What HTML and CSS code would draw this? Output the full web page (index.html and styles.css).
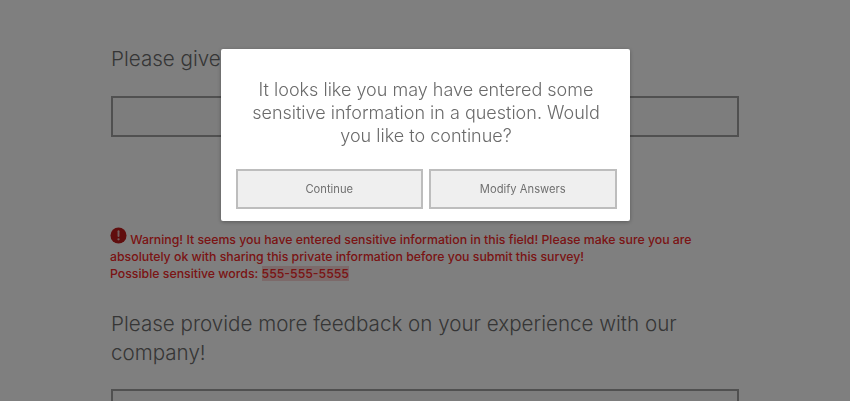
FILE: index.html
```html
<!DOCTYPE html>
<html lang="en">
<head>
    <meta charset="UTF-8">
    <meta name="viewport" content="width=device-width, initial-scale=1.0">
    <title>Survey</title>
    <link rel="stylesheet" href="styles.css">
</head>
<body>
    <div class="survey">
        <div class="question">
            <h2>Please give us your feedback on our service today!</h2>
            <div class="answer-box"></div>
        </div>
        <div class="warning">
            <svg class="warning-icon" viewBox="0 0 18 18" width="17" height="17">
                <circle cx="9" cy="9" r="8.5" fill="#c01c1c"/>
                <rect x="8" y="3.5" width="2" height="7" rx="1" fill="#e8c0c0"/>
                <circle cx="9" cy="13" r="1.2" fill="#e8c0c0"/>
            </svg>
            Warning! It seems you have entered sensitive information in this field! Please make sure you are absolutely ok with sharing this private information before you submit this survey!<br>
            Possible sensitive words: <span class="highlight">555-555-5555</span>
        </div>
        <div class="question second">
            <h2>Please provide more feedback on your experience with our company!</h2>
            <div class="answer-box"></div>
        </div>
    </div>

    <div class="overlay">
        <div class="modal">
            <p>It looks like you may have entered some sensitive information in a question. Would you like to continue?</p>
            <div class="modal-buttons">
                <button type="button">Continue</button>
                <button type="button">Modify Answers</button>
            </div>
        </div>
    </div>
</body>
</html>
```

FILE: styles.css
```css
* {
    margin: 0;
    padding: 0;
    box-sizing: border-box;
    font-family: "Inter", "Liberation Sans", sans-serif;
}

html, body {
    height: 401px;
    overflow: hidden;
}

body {
    background: #fff;
}

.survey {
    width: 628px;
    margin-left: 111px;
    padding-top: 44px;
}

.question h2 {
    font-size: 20.6px;
    font-weight: 300;
    line-height: 29px;
    color: #6c6c6c;
}

.answer-box {
    height: 41px;
    margin-top: 23px;
    border: 2px solid #a0a0a0;
    background: #fafafa;
}

.warning {
    width: 600px;
    margin-top: 90px;
    margin-left: -1px;
    font-size: 12.3px;
    font-weight: 500;
    line-height: 17px;
    color: #f52a2a;
}

.warning-icon {
    vertical-align: 0;
}

.highlight {
    background: #f9d4d4;
}

.second {
    margin-top: 27px;
}

.second .answer-box {
    margin-top: 22px;
}

.overlay {
    position: fixed;
    top: 0;
    left: 0;
    width: 100%;
    height: 100%;
    background: rgba(0, 0, 0, 0.5);
    display: flex;
    justify-content: center;
    align-items: flex-start;
    padding-top: 49px;
}

.modal {
    width: 409px;
    height: 172px;
    background: #fff;
    border-radius: 2px;
    padding: 29px 13px 0 15px;
    box-shadow: 0 1px 4px rgba(0, 0, 0, 0.3);
}

.modal p {
    font-size: 18px;
    font-weight: 300;
    line-height: 23px;
    text-align: center;
    color: #6a6a6a;
}

.modal-buttons {
    display: flex;
    gap: 6px;
    margin-top: 22px;
}

.modal-buttons button {
    flex: 1;
    height: 40px;
    border: 2px solid #bdbdbd;
    background: #efefef;
    font-size: 11.2px;
    color: #6f6f6f;
}
```
